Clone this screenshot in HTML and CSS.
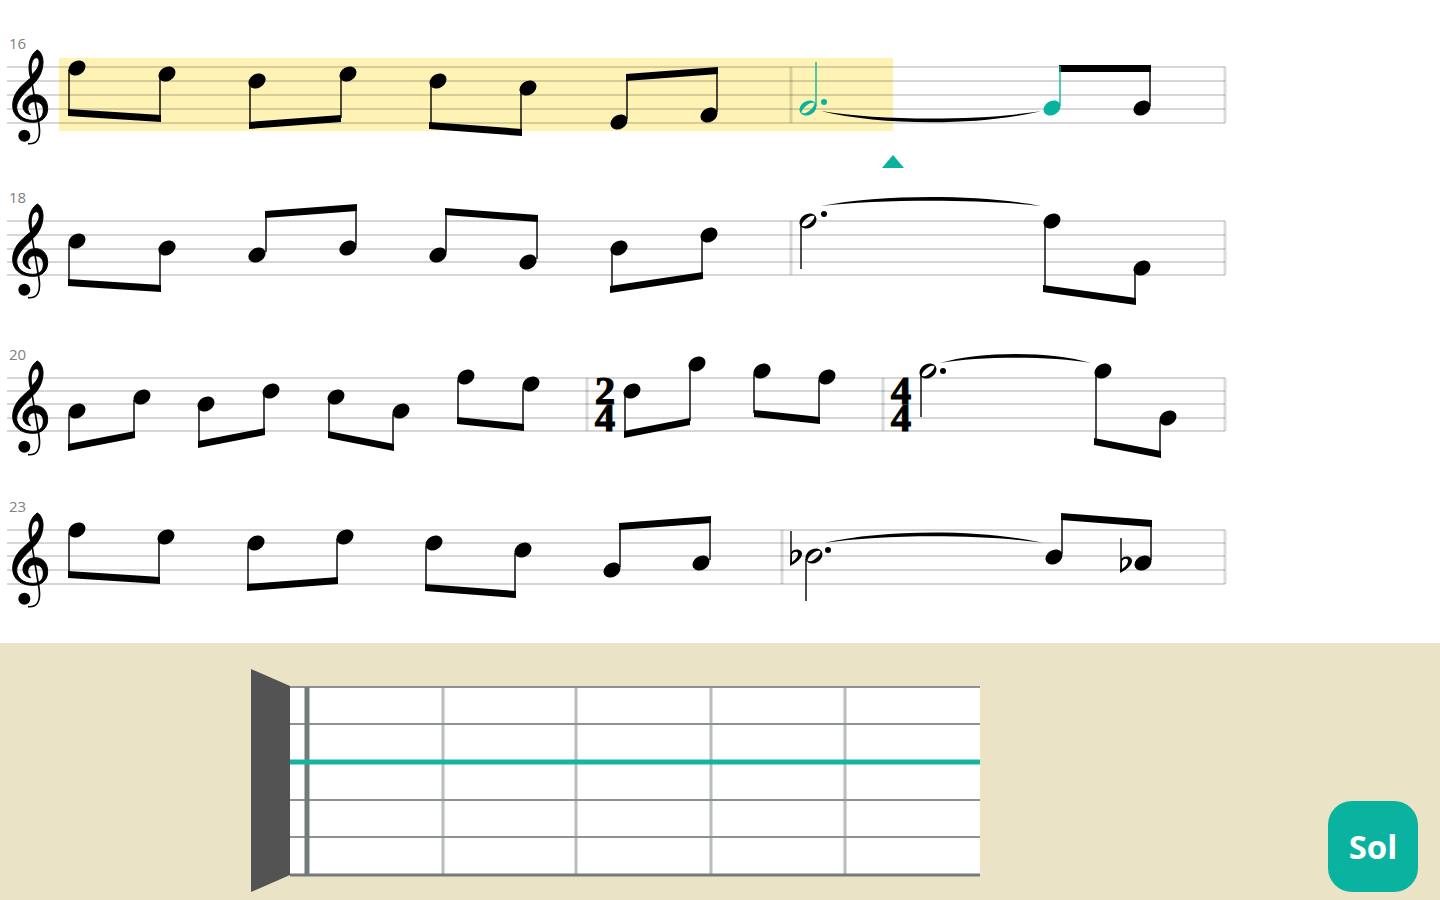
FILE: index.html
```html
<!DOCTYPE html>
<html lang="es">
<head>
    <meta charset="UTF-8">
    <meta name="viewport" content="width=device-width, initial-scale=1.0">
    <title>Sol</title>
    <link rel="stylesheet" href="styles.css">
</head>
<body>
    <!-- shared music symbols -->
    <svg class="symbols" width="0" height="0" aria-hidden="true">
        <defs>
            <ellipse id="head" rx="9" ry="7" transform="rotate(-30)"/>
            <g id="half">
                <path fill-rule="evenodd" transform="rotate(-30)" d="M-9 0a9 7 0 1 0 18 0a9 7 0 1 0-18 0zM-8 1C-6-3 6-5 8-1C6 3-6 5-8 1z"/>
            </g>
            <g id="flat">
                <path class="stem" d="M1 0V34"/>
                <path fill-rule="evenodd" d="M1 21C5 17 12 18 12 23C12 27 6 32 0 35zM2 23V31C6 28 8 26 8 23C8 20 4 20 2 23z"/>
            </g>
            <symbol id="clef" viewBox="0 0 150 360">
                <path class="clef-body" fill-rule="evenodd" d="M112 60C98 68 85 92 87 118C88 128 89 136 92 144C60 170 39 190 38 226C38 257 62 277 98 277C126 277 143 260 143 236C143 210 128 194 106 194C84 194 69 210 69 228C69 242 78 252 92 254C84 246 82 238 84 230C87 219 95 215 104 215C120 215 130 225 130 240C130 260 120 271 98 271C70 271 50 254 50 232C50 210 74 188 100 162C118 144 129 122 129 96C129 80 122 64 112 60zM96 134C93 122 92 102 99 90C104 83 112 80 116 88C120 100 116 116 96 134z"/>
                <path class="clef-stem" d="M93 140L117 285C123 325 112 343 84 341"/>
                <circle cx="73" cy="317" r="18"/>
            </symbol>
        </defs>
    </svg>

    <main class="score">
        <svg class="system" viewBox="0 0 1440 154" role="img" aria-label="16">
            <rect class="played" x="59" y="38" width="834" height="73"/>
            <path class="staff" d="M7 47H1225M7 61H1225M7 75H1225M7 89H1225M7 103H1225"/>
            <path class="bar" d="M791 47V103M1225 47V103"/>
            <text class="number" x="9" y="29">16</text>
            <use href="#clef" x="0" y="10" width="50" height="120"/>
            <path class="stem" d="M69 50V92M160 57V98M250 63V105M341 57V98M431 63V105M521 70V112M627 99V58M717 92V51M1150 86V48"/>
            <path d="M68 89L161 95v7L68 96zM249 102L341 95v7L249 109zM429 102L522 109v7L429 109zM626 54L718 47v7L626 61zM1059 45H1151v7H1059z"/>
            <use href="#head" x="77" y="48"/>
            <use href="#head" x="167" y="54"/>
            <use href="#head" x="257" y="61"/>
            <use href="#head" x="348" y="54"/>
            <use href="#head" x="438" y="61"/>
            <use href="#head" x="528" y="68"/>
            <use href="#head" x="619" y="102"/>
            <use href="#head" x="709" y="95"/>
            <path d="M821 91C881 106 981 106 1041 91C981 101 881 101 821 91z"/>
            <g class="current">
                <path class="stem" d="M816 42V86M1060 46V86"/>
                <use href="#half" x="808" y="88"/>
                <circle cx="824" cy="82" r="3"/>
                <use href="#head" x="1052" y="88"/>
                <path d="M893 135L904 148H882z"/>
            </g>
            <use href="#head" x="1142" y="88"/>
        </svg>

        <svg class="system" viewBox="0 0 1440 157" role="img" aria-label="18">
            <path class="staff" d="M7 47H1225M7 61H1225M7 75H1225M7 88H1225M7 101H1225"/>
            <path class="bar" d="M791 47V101M1225 47V101"/>
            <text class="number" x="9" y="29">18</text>
            <use href="#clef" x="0" y="10" width="50" height="120"/>
            <path class="stem" d="M69 70V108M160 76V114M266 78V40M356 71V33M446 78V37M537 85V44M612 76V115M702 64V101M801 50V95M1045 50V114M1135 97V127"/>
            <path d="M68 105L161 111v7L68 112zM265 37L357 30v7L265 44zM445 34L538 41v7L445 41zM610 112L703 98v7L610 119zM1043 111L1136 124v7L1043 118z"/>
            <use href="#head" x="77" y="67"/>
            <use href="#head" x="167" y="74"/>
            <use href="#head" x="257" y="81"/>
            <use href="#head" x="348" y="74"/>
            <use href="#head" x="438" y="81"/>
            <use href="#head" x="528" y="88"/>
            <use href="#head" x="619" y="74"/>
            <use href="#head" x="709" y="61"/>
            <use href="#half" x="808" y="47"/>
            <circle cx="824" cy="40" r="3"/>
            <path d="M821 32C881 20 981 20 1041 32C981 25 881 25 821 32z"/>
            <use href="#head" x="1052" y="47"/>
            <use href="#head" x="1142" y="94"/>
        </svg>

        <svg class="system" viewBox="0 0 1440 152" role="img" aria-label="20">
            <path class="staff" d="M7 47H1225M7 60H1225M7 73H1225M7 87H1225M7 100H1225"/>
            <path class="bar" d="M587 47V100M883 47V100M1225 47V100"/>
            <text class="number" x="9" y="29">20</text>
            <use href="#clef" x="0" y="10" width="50" height="120"/>
            <text class="meter" x="605" y="73">2</text>
            <text class="meter" x="605" y="100">4</text>
            <text class="meter" x="901" y="73">4</text>
            <text class="meter" x="901" y="100">4</text>
            <path class="stem" d="M69 83V116M134 69V103M199 76V113M264 63V100M329 69V103M393 83V116M458 49V89M523 56V96M625 63V103M690 36V90M754 43V82M819 49V89M921 42V86M1096 42V110M1160 90V123"/>
            <path d="M68 113L135 100v7L68 120zM198 110L265 97v7L198 117zM328 100L394 113v7L328 107zM457 86L524 93v7L457 93zM624 100L690 87v7L624 107zM754 79L820 86v7L754 86zM1094 107L1161 120v7L1094 114z"/>
            <use href="#head" x="77" y="80"/>
            <use href="#head" x="142" y="66"/>
            <use href="#head" x="206" y="73"/>
            <use href="#head" x="271" y="60"/>
            <use href="#head" x="336" y="66"/>
            <use href="#head" x="401" y="80"/>
            <use href="#head" x="466" y="46"/>
            <use href="#head" x="531" y="53"/>
            <use href="#head" x="632" y="60"/>
            <use href="#head" x="697" y="33"/>
            <use href="#head" x="762" y="40"/>
            <use href="#head" x="827" y="46"/>
            <use href="#half" x="928" y="40"/>
            <circle cx="943" cy="40" r="3"/>
            <path d="M940 32C980 20 1051 20 1091 32C1051 25 980 25 940 32z"/>
            <use href="#head" x="1103" y="40"/>
            <use href="#head" x="1168" y="87"/>
        </svg>

        <svg class="system" viewBox="0 0 1440 160" role="img" aria-label="23">
            <path class="staff" d="M7 47H1225M7 60H1225M7 73H1225M7 87H1225M7 101H1225"/>
            <path class="bar" d="M782 47V101M1225 47V101"/>
            <text class="number" x="9" y="29">23</text>
            <use href="#clef" x="0" y="10" width="50" height="120"/>
            <path class="stem" d="M69 50V91M159 56V97M248 63V104M337 56V97M426 63V104M515 70V111M620 84V43M710 77V36M806 76V118M1062 71V33M1151 77V40"/>
            <path d="M68 88L160 94v7L68 95zM247 101L338 94v7L247 108zM425 101L516 108v7L425 108zM619 40L711 33v7L619 47zM1061 30L1152 37v7L1061 37z"/>
            <use href="#head" x="77" y="47"/>
            <use href="#head" x="166" y="54"/>
            <use href="#head" x="256" y="60"/>
            <use href="#head" x="345" y="54"/>
            <use href="#head" x="434" y="60"/>
            <use href="#head" x="523" y="67"/>
            <use href="#head" x="612" y="87"/>
            <use href="#head" x="701" y="80"/>
            <use href="#flat" x="790" y="48"/>
            <use href="#half" x="814" y="73"/>
            <circle cx="828" cy="67" r="3"/>
            <path d="M824 60C884 46 982 46 1043 60C982 51 884 51 824 60z"/>
            <use href="#head" x="1054" y="74"/>
            <use href="#flat" x="1120" y="55"/>
            <use href="#head" x="1143" y="80"/>
        </svg>
    </main>

    <footer class="panel">
        <svg class="fretboard" viewBox="0 0 730 223" role="img" aria-label="Sol">
            <rect class="neck" x="40" y="17" width="690" height="189"/>
            <path class="fret" d="M193 18V205M326 18V205M461 18V205M595 18V205"/>
            <path class="string" d="M40 18H730M40 55H730M40 131H730M40 168H730"/>
            <path class="string thick" d="M40 206H730"/>
            <path class="nut" d="M57 18V206"/>
            <path class="string active" d="M39 93H730"/>
            <path class="headstock" d="M1 0L40 17V206L1 223z"/>
        </svg>
        <button class="note" type="button">Sol</button>
    </footer>
</body>
</html>
```

FILE: styles.css
```css
*{
    box-sizing: border-box;
    margin: 0px;
    padding: 0px;
}
body{
    display: flex;
    flex-direction: column;
    min-height: 100vh;
    background: #fff;
    font-family: "Open Sans", "Noto Sans", sans-serif;
}
.symbols{
    position: absolute;
}

/* score */
.score{
    padding-top: 20px;
}
.system{
    display: block;
    width: 100%;
    height: auto;
    color: #000;
    fill: currentColor;
}
.played{
    fill: #fef3b4;
}
.staff, .bar{
    fill: none;
    stroke: #000;
    stroke-width: 2;
    stroke-opacity: 0.16;
}
.bar{
    stroke-width: 3;
    stroke-opacity: 0.14;
}
.stem{
    fill: none;
    stroke: currentColor;
    stroke-width: 2;
    stroke-opacity: 0.7;
}
.clef-body{
    stroke: currentColor;
    stroke-width: 3;
}
.clef-stem{
    fill: none;
    stroke: currentColor;
    stroke-width: 5;
}
.current{
    color: #08b39d;
}
.number{
    fill: #808080;
    font-size: 15px;
}
.meter{
    font-family: "Liberation Serif", serif;
    font-size: 41px;
    font-weight: bold;
    stroke: currentColor;
    stroke-width: 1;
    text-anchor: middle;
}

/* instrument */
.panel{
    display: flex;
    flex: 1;
    align-items: flex-end;
    justify-content: space-between;
    gap: 20px;
    padding: 26px 22px 8px 250px;
    background: #eae3c5;
}
.fretboard{
    display: block;
    flex: 0 1 730px;
    min-width: 0;
    height: auto;
    fill: none;
}
.neck{
    fill: #fff;
}
.headstock{
    fill: #535353;
}
.fret{
    stroke: #b9bdbc;
    stroke-width: 3;
}
.nut{
    stroke: #737b7a;
    stroke-width: 5;
}
.string{
    stroke: #8d9391;
    stroke-width: 2;
}
.thick{
    stroke: #737b7a;
    stroke-width: 3;
}
.active{
    stroke: #14b5a0;
    stroke-width: 5;
}
.note{
    flex: none;
    width: 90px;
    height: 91px;
    border: none;
    border-radius: 24px;
    background: #0ab3a0;
    color: #fff;
    font-family: inherit;
    font-size: 33px;
    font-weight: 700;
    cursor: pointer;
}
```
